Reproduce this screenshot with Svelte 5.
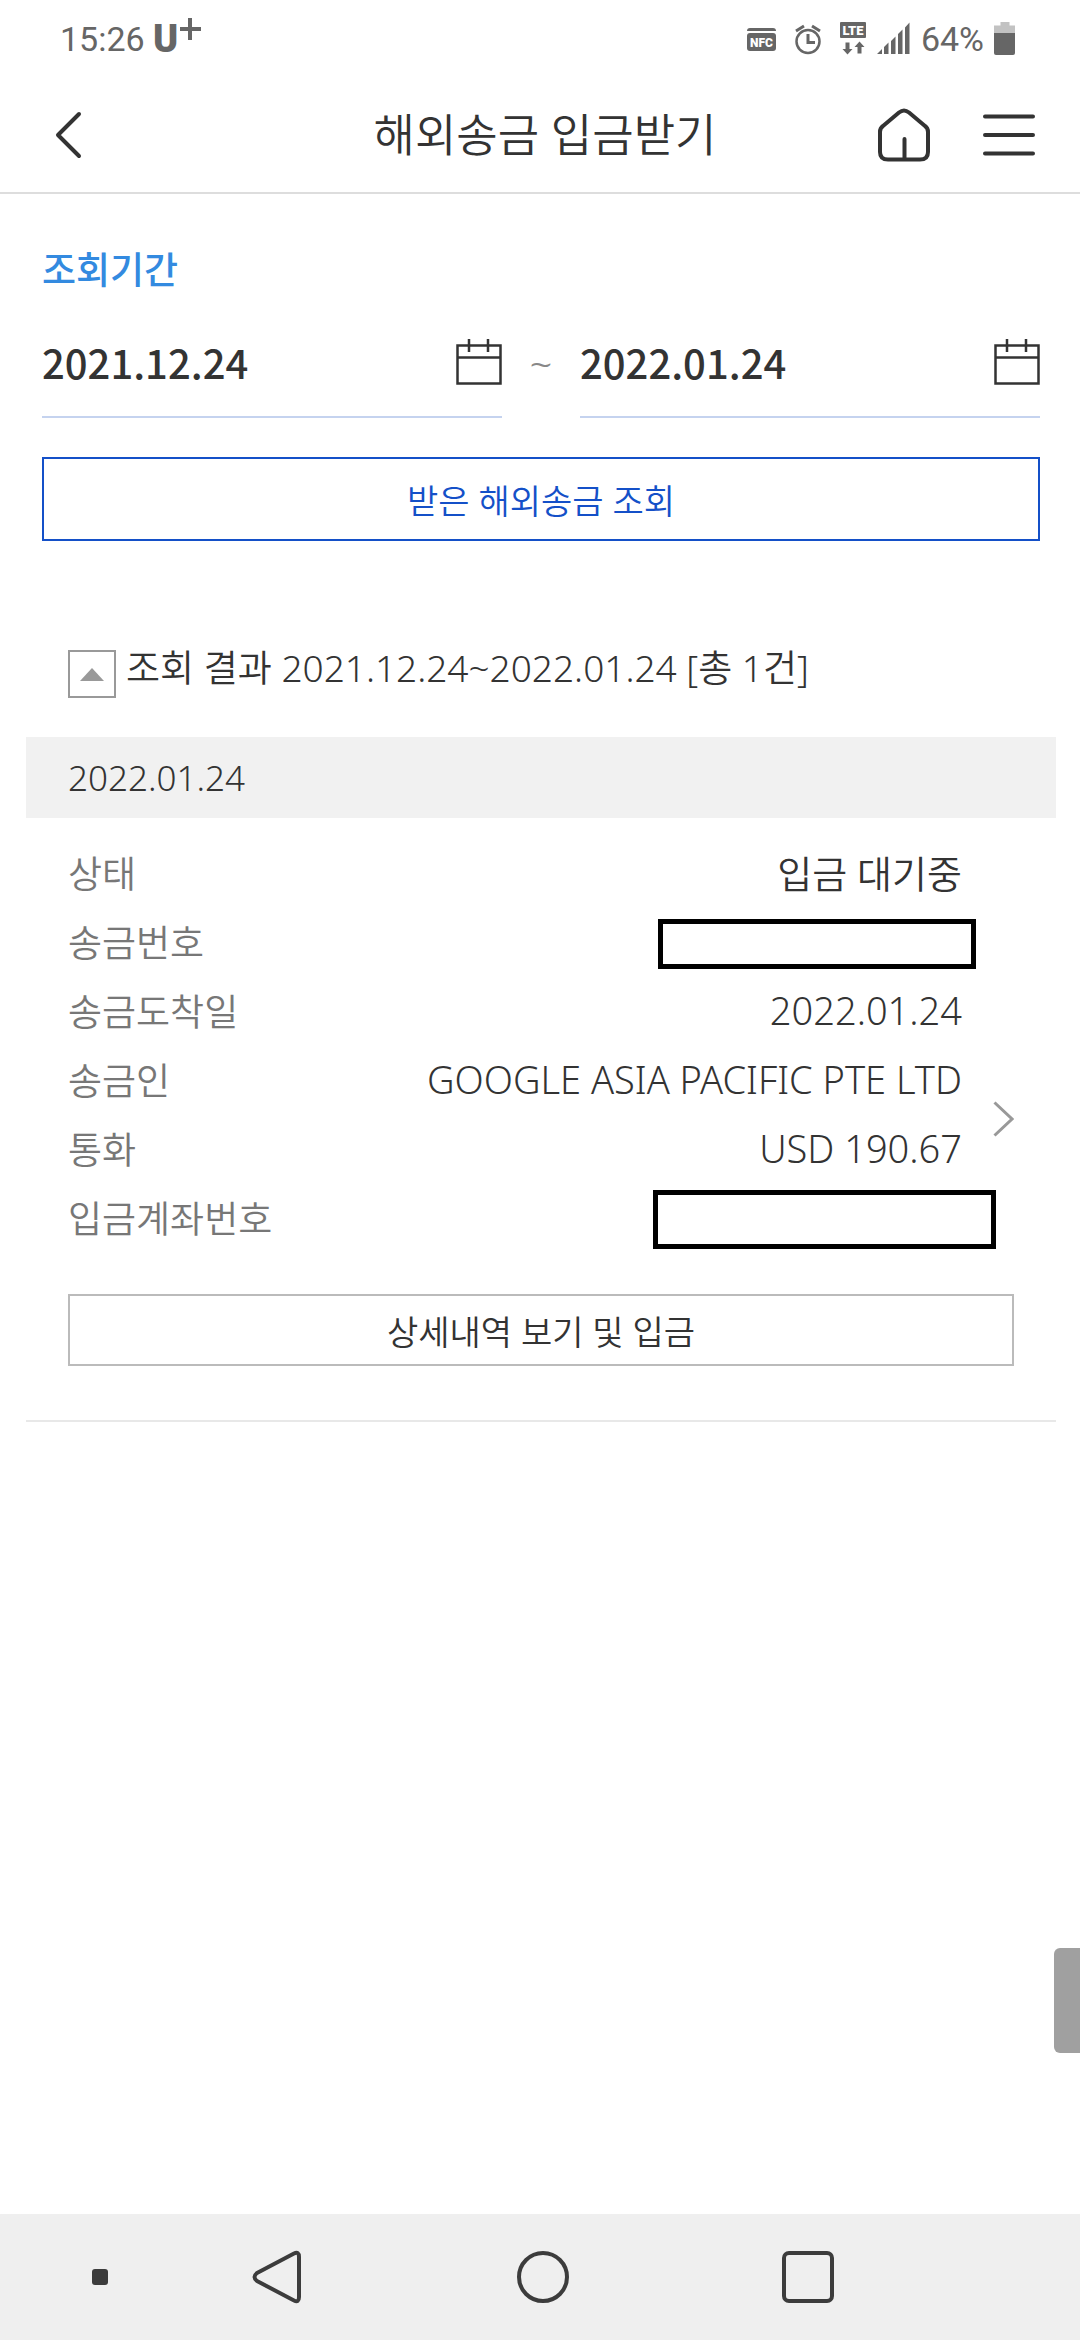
<script lang="ts">
	let from = $state('2021.12.24');
	let to = $state('2022.01.24');
	let open = $state(true);

	const rows: { label: string; value?: string; mask?: string }[] = [
		{ label: '상태', value: '입금 대기중' },
		{ label: '송금번호', mask: 'short' },
		{ label: '송금도착일', value: '2022.01.24' },
		{ label: '송금인', value: 'GOOGLE ASIA PACIFIC PTE LTD' },
		{ label: '통화', value: 'USD 190.67' },
		{ label: '입금계좌번호', mask: 'long' },
	];
</script>

{#snippet calendar()}
	<svg width="46" height="46" viewBox="0 0 46 46" fill="none" stroke="#333" stroke-width="2.5">
		<path d="M1.500 6.500h43v38h-43zM1 18.500h44" />
		<path d="M13 0v13M32 0v13" />
	</svg>
{/snippet}

<div class="screen">
	<div class="status">
		<span class="clock">15:26</span>
		<svg class="carrier" width="50" height="46" viewBox="0 0 50 46" fill="#666">
			<text x="0" y="36" font-family="Roboto" font-weight="900" font-size="38">U</text>
			<path d="M27 11h8V2h4v9h9v4h-9v9h-4v-9h-8z" />
		</svg>
		<div class="indicators">
			<svg width="30" height="36" viewBox="0 0 30 36" fill="#666">
				<path d="M0 12q0-3 3-3h23q3 0 3 3z" />
				<rect y="14" width="29" height="18" rx="3" />
				<text x="14.5" y="28" fill="#fff" font-family="Roboto" font-weight="900" font-size="12" text-anchor="middle">NFC</text>
			</svg>
			<svg width="28" height="36" viewBox="0 0 28 36" fill="none" stroke="#666" stroke-width="2.5">
				<circle cx="14" cy="22.5" r="11.5" />
				<path d="M14 15v8.500h7M2 12l8-5M18 7l8 5" stroke-width="3" />
			</svg>
			<svg width="28" height="36" viewBox="0 0 28 36" fill="#666">
				<rect x="1" y="3" width="26" height="16" rx="1" />
				<text x="14" y="16" fill="#fff" font-family="Roboto" font-weight="900" font-size="13" text-anchor="middle">LTE</text>
				<path d="M6.500 23.500h4V30h3L8.500 35.500 3.500 30h3zM18.500 34.500h4V28h3L20.500 22.500 15.500 28h3z" />
			</svg>
			<svg width="34" height="36" viewBox="0 0 34 36" fill="#666">
				<path d="M0 35l5-5v5zM7 28l4.500-4.500V35H7zM14 22l4.500-4.500V35H14zM21 15l4.500-4.500V35H21zM28 8.500l4.500-5V35H28z" />
			</svg>
			<span class="percent">64%</span>
			<svg width="22" height="36" viewBox="0 0 22 36">
				<path d="M0 15V6.500h6.500V3h9v3.500H21V15z" fill="#c2c2c2" />
				<path d="M0 14h21v20q0 2-2 2H2q-2 0-2-2z" fill="#666" />
			</svg>
		</div>
	</div>

	<header>
		<button class="icon back" aria-label="뒤로">
			<svg width="28" height="48" viewBox="0 0 28 48" fill="none" stroke="#333" stroke-width="4" stroke-linecap="round" stroke-linejoin="round">
				<path d="M25 3L4 24l21 21" />
			</svg>
		</button>
		<h1>해외송금 입금받기</h1>
		<div class="actions">
			<button class="icon" aria-label="홈">
				<svg width="54" height="54" viewBox="0 0 54 54" fill="none" stroke="#333" stroke-width="4" stroke-linecap="round" stroke-linejoin="round">
					<path d="M3 24q0-4 3-6L22 4.500q5-4 10 0L48 18q3 2 3 6v20q0 7.500-8 7.500H11q-8 0-8-7.500zM27.500 31v20" />
				</svg>
			</button>
			<button class="icon" aria-label="메뉴">
				<svg width="54" height="54" viewBox="0 0 54 54" fill="none" stroke="#333" stroke-width="4" stroke-linecap="round">
					<path d="M3 8.500h48M3 27h48M3 45.500h48" />
				</svg>
			</button>
		</div>
	</header>

	<main>
		<form class="search" onsubmit={(e) => e.preventDefault()}>
			<h2>조회기간</h2>
			<div class="period">
				<div class="date">
					<input type="text" bind:value={from} aria-label="시작일" />
					<button type="button" class="icon" aria-label="시작일 선택">{@render calendar()}</button>
				</div>
				<span class="tilde">~</span>
				<div class="date">
					<input type="text" bind:value={to} aria-label="종료일" />
					<button type="button" class="icon" aria-label="종료일 선택">{@render calendar()}</button>
				</div>
			</div>
			<button class="submit">받은 해외송금 조회</button>
		</form>

		<section class="results">
			<div class="summary">
				<button class="toggle" aria-label="접기" aria-expanded={open} onclick={() => (open = !open)}>
					<svg width="24" height="13" viewBox="0 0 24 13" fill="#999"><path d="M0 13L12 0l12 13z" /></svg>
				</button>
				<h3>조회 결과 2021.12.24~2022.01.24 [총 1건]</h3>
			</div>

			{#if open}
				<div class="day">2022.01.24</div>
				<article>
					<dl>
						{#each rows as row}
							<div class="row">
								<dt>{row.label}</dt>
								<dd>
									{#if row.mask}
										<span class="mask {row.mask}"></span>
									{:else}
										{row.value}
									{/if}
								</dd>
							</div>
						{/each}
					</dl>
					<button class="detail">상세내역 보기 및 입금</button>
					<svg class="chevron" width="22" height="36" viewBox="0 0 22 36" fill="none" stroke="#999" stroke-width="3">
						<path d="M2.500 1.500L20 18 2.500 34.500" />
					</svg>
				</article>
			{/if}
		</section>
	</main>

	<div class="handle"></div>

	<nav>
		<button class="icon dot" aria-label="고정">
			<svg width="16" height="16"><rect width="16" height="16" rx="3" fill="#3c3c3c" /></svg>
		</button>
		<button class="icon" aria-label="이전">
			<svg width="54" height="54" viewBox="0 0 54 54" fill="none" stroke="#3c3c3c" stroke-width="4" stroke-linejoin="round">
				<path d="M43 3.500q5-2.500 5 3.500v40q0 6-5 3.500L6 31q-5-4 0-8z" />
			</svg>
		</button>
		<button class="icon" aria-label="홈 화면">
			<svg width="54" height="54" viewBox="0 0 54 54" fill="none" stroke="#3c3c3c" stroke-width="4">
				<circle cx="27" cy="27" r="24" />
			</svg>
		</button>
		<button class="icon" aria-label="최근 앱">
			<svg width="54" height="54" viewBox="0 0 54 54" fill="none" stroke="#3c3c3c" stroke-width="4">
				<rect x="3" y="3" width="48" height="48" rx="5" />
			</svg>
		</button>
	</nav>
</div>

<style>
	:global(body) {
		margin: 0;
		background: #fff;
	}

	.screen {
		min-height: 100vh;
		display: flex;
		flex-direction: column;
		font-family: 'Noto Sans', 'Noto Sans CJK KR', sans-serif;
		font-weight: 350;
		color: #333;
	}

	button,
	input {
		font: inherit;
		color: inherit;
		background: none;
		border: 0;
		border-radius: 0;
		padding: 0;
		margin: 0;
	}

	h1,
	h2,
	h3,
	dl,
	dd {
		margin: 0;
		font-weight: inherit;
	}

	svg {
		display: block;
		flex: none;
	}

	.icon {
		display: flex;
		align-items: center;
		justify-content: center;
	}

	/* status bar */

	.status {
		display: flex;
		align-items: center;
		height: 78px;
		padding: 0 64px 0 60px;
		font-family: Roboto, sans-serif;
		font-size: 34px;
		font-weight: 400;
		color: #666;
	}

	.carrier {
		margin: 0 auto 0 8px;
	}

	.indicators {
		display: flex;
		align-items: center;
		gap: 10px;
	}

	.indicators svg {
		margin-bottom: 4px;
	}

	.indicators svg:nth-child(-n + 2) {
		margin-right: 7px;
	}

	/* header */

	header {
		display: grid;
		grid-template-columns: 1fr auto 1fr;
		align-items: center;
		height: 114px;
		padding: 0 44px 0 54px;
		border-bottom: 2px solid #ddd;
	}

	.back {
		justify-self: start;
	}

	h1 {
		font-size: 45px;
		line-height: 60px;
	}

	.actions {
		justify-self: end;
		display: flex;
		gap: 51px;
	}

	/* search form */

	.search {
		padding: 48px 40px 0 42px;
	}

	h2 {
		font-size: 37px;
		font-weight: 500;
		line-height: 56px;
		color: #338ae0;
	}

	.period {
		display: flex;
		align-items: center;
		margin-top: 18px;
	}

	.date {
		flex: 1;
		min-width: 0;
		box-sizing: border-box;
		display: flex;
		align-items: center;
		height: 102px;
		padding-bottom: 8px;
		border-bottom: 2px solid #c5d3ef;
	}

	.date input {
		flex: 1;
		min-width: 0;
		font-family: 'Noto Sans CJK KR', sans-serif;
		font-size: 40px;
		font-weight: 500;
	}

	.tilde {
		width: 78px;
		padding-bottom: 8px;
		text-align: center;
		font-size: 40px;
		color: #888;
	}

	.submit {
		display: block;
		width: 100%;
		height: 84px;
		margin-top: 39px;
		border: 2px solid #1450c8;
		font-size: 34px;
		color: #1450c8;
	}

	/* results */

	.results {
		padding: 97px 24px 0 26px;
	}

	.summary {
		display: flex;
		align-items: center;
		gap: 10px;
		padding-left: 42px;
	}

	.toggle {
		display: flex;
		align-items: center;
		justify-content: center;
		width: 48px;
		height: 48px;
		margin-top: 12px;
		border: 2px solid #999;
	}

	h3 {
		font-size: 37px;
		line-height: 60px;
	}

	.day {
		margin-top: 39px;
		padding-left: 42px;
		background: #f1f1f1;
		font-size: 35px;
		line-height: 81px;
	}

	article {
		position: relative;
		padding: 19px 42px 54px;
		border-bottom: 2px solid #e8e8e8;
	}

	.row {
		display: flex;
		align-items: center;
		justify-content: space-between;
		height: 69px;
		padding-right: 52px;
	}

	dt {
		font-size: 37px;
		color: #777;
	}

	dd {
		font-size: 38px;
	}

	.mask {
		display: block;
		box-sizing: border-box;
		margin-top: 6px;
		border: 5px solid #000;
	}

	.mask.short {
		width: 318px;
		height: 50px;
		margin-right: -14px;
	}

	.mask.long {
		width: 343px;
		height: 59px;
		margin-right: -34px;
	}

	.detail {
		display: block;
		width: 100%;
		height: 72px;
		margin-top: 43px;
		border: 2px solid #bbb;
		font-size: 34px;
	}

	.chevron {
		position: absolute;
		top: 50%;
		right: 42px;
		transform: translateY(-50%);
	}

	/* side handle */

	.handle {
		position: fixed;
		right: 0;
		bottom: 287px;
		width: 26px;
		height: 105px;
		border-radius: 6px 0 0 6px;
		background: #a0a0a0;
	}

	/* system navigation */

	nav {
		display: grid;
		grid-template-columns: 145fr 265fr 265fr 265fr 140fr;
		align-items: center;
		height: 126px;
		margin-top: auto;
		background: #efefef;
	}

	.dot {
		justify-content: flex-end;
		padding-right: 37px;
	}
</style>
